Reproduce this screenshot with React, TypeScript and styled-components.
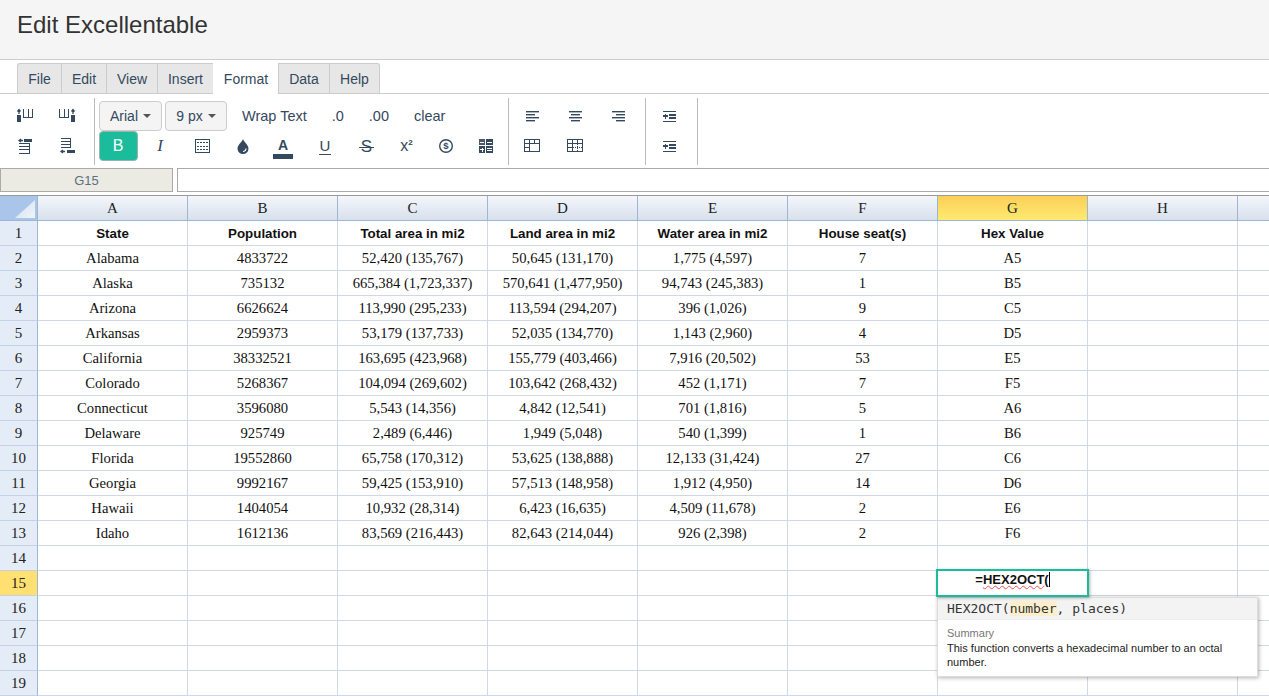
import React from "react";
import styled, { createGlobalStyle } from "styled-components";

const INK = "#34495e";

const Global = createGlobalStyle`
  html, body { margin: 0; padding: 0; height: 696px; overflow: hidden; background: #fff; }
  * { box-sizing: border-box; }
  body { font-family: "Liberation Sans", Arial, sans-serif; color: #333; }
`;

const Page = styled.div`
  width: 1269px;
  height: 696px;
  overflow: hidden;
  display: flex;
  flex-direction: column;
`;

const Header = styled.header`
  height: 60px;
  flex: none;
  background: #f5f5f5;
  border-bottom: 1px solid #ccc;
  padding: 11px 0 0 17px;
`;

const Title = styled.h1`
  margin: 0;
  font-size: 24px;
  font-weight: 400;
  line-height: 28px;
  color: #333;
`;

const TabBar = styled.nav`
  height: 34px;
  flex: none;
  display: flex;
  align-items: flex-end;
  padding-left: 17px;
  border-bottom: 1px solid #ccc;
`;

const Tab = styled.div<{ $active?: boolean; $w: number }>`
  width: ${(p) => p.$w}px;
  height: ${(p) => (p.$active ? 31 : 30)}px;
  margin-bottom: ${(p) => (p.$active ? -1 : 0)}px;
  display: flex;
  align-items: center;
  justify-content: center;
  font-size: 14px;
  color: ${INK};
  background: ${(p) => (p.$active ? "#fff" : "#e7e7e7")};
  border: 1px solid #ccc;
  border-bottom: 0;
  border-right-width: 0;
  border-color: ${(p) => (p.$active ? "transparent" : "#ccc")};
  &:first-child { border-top-left-radius: 3px; }
  &:last-child { border-top-right-radius: 3px; border-right-width: 1px; }
`;

const Toolbar = styled.div`
  height: 74px;
  flex: none;
  display: flex;
  padding-top: 4px;
`;

const Group = styled.div<{ $w: number; $pl: number }>`
  width: ${(p) => p.$w}px;
  height: 67px;
  padding: 3px 0 0 ${(p) => p.$pl}px;
  border-right: 1px solid #bbb;
  flex: none;
`;

const ToolRow = styled.div`
  height: 30px;
  display: flex;
  align-items: center;
`;

const IconButton = styled.div<{ $w?: number }>`
  width: ${(p) => p.$w ?? 41}px;
  height: 30px;
  flex: none;
  display: flex;
  align-items: center;
  justify-content: center;
  color: ${INK};
`;

const Select = styled.div<{ $w: number; $ml?: number }>`
  width: ${(p) => p.$w}px;
  height: 30px;
  margin-left: ${(p) => p.$ml ?? 0}px;
  flex: none;
  display: flex;
  align-items: center;
  justify-content: center;
  gap: 5px;
  font-size: 14px;
  color: ${INK};
  background: #f4f4f4;
  border: 1px solid #ccc;
  border-radius: 4px;
`;

const Caret = styled.span`
  width: 0;
  height: 0;
  border-left: 4px solid transparent;
  border-right: 4px solid transparent;
  border-top: 4px solid #555;
`;

const TextTool = styled.div<{ $ml?: number }>`
  padding: 0 12.5px;
  margin-left: ${(p) => p.$ml ?? 0}px;
  font-size: 14.5px;
  color: ${INK};
`;

const BoldButton = styled.div`
  width: 39px;
  height: 30px;
  margin-right: 1px;
  padding-right: 1px;
  flex: none;
  display: flex;
  align-items: center;
  justify-content: center;
  font-size: 16px;
  color: #fff;
  background: #1abc9c;
  border: 1px solid #9db3ab;
  border-radius: 4px;
`;

const ItalicGlyph = styled.span`
  font: italic 17px "Liberation Serif", serif;
  color: ${INK};
`;

const ColorGlyph = styled.span`
  display: flex;
  flex-direction: column;
  align-items: center;
  font-size: 14px;
  font-weight: 700;
  line-height: 15px;
  margin-top: 4px;
  color: ${INK};
  &::after {
    content: "";
    display: block;
    width: 20px;
    height: 5px;
    margin-top: 1px;
    background: ${INK};
  }
`;

const UnderGlyph = styled.span`
  font-size: 15px;
  line-height: 15px;
  padding: 0 1px 1px;
  color: ${INK};
  border-bottom: 1px solid ${INK};
`;

const StrikeGlyph = styled.span`
  font-size: 17px;
  line-height: 17px;
  padding: 0 2px;
  color: ${INK};
  background: linear-gradient(${INK}, ${INK}) center 9px / 100% 1px no-repeat;
`;

const PowerGlyph = styled.span`
  font-size: 16px;
  line-height: 14px;
  color: ${INK};
  sup { font-size: 8px; vertical-align: 6px; line-height: 0; font-weight: 700; }
`;

const NameRow = styled.div`
  height: 24px;
  flex: none;
  display: flex;
  gap: 4px;
`;

const NameBox = styled.div`
  width: 173px;
  flex: none;
  display: flex;
  align-items: center;
  justify-content: center;
  font-size: 13px;
  color: #5f6f80;
  background: #ebebe4;
  border: 1px solid #aaa;
`;

const FormulaInput = styled.div`
  flex: 1;
  margin-right: -2px;
  background: #fff;
  border: 1px solid #aaa;
`;

const Sheet = styled.div`
  margin-top: 3px;
  flex: none;
  display: grid;
  grid-template-columns: 38px repeat(9, 150px);
  grid-auto-rows: 25px;
  border-top: 1px solid #999;
  width: 1388px;
`;

const Corner = styled.div`
  position: relative;
  background: #a9c5e9;
  border-right: 1px solid #9db6d2;
  border-bottom: 1px solid #9db6d2;
  &::after {
    content: "";
    position: absolute;
    right: 2px;
    bottom: 2px;
    width: 20px;
    height: 18px;
    background: linear-gradient(135deg, #d3e0f2, #f0f4fa);
    clip-path: polygon(100% 0, 100% 100%, 0 100%);
  }
`;

const ColHead = styled.div<{ $on?: boolean }>`
  display: flex;
  align-items: center;
  justify-content: center;
  font: 15px "Liberation Serif", serif;
  color: #222;
  background: ${(p) =>
    p.$on
      ? "linear-gradient(#fccf58, #ffea70)"
      : "linear-gradient(#f4f7fb, #d7e0ec)"};
  border-right: 1px solid #9db6d2;
  border-bottom: 1px solid #9db6d2;
`;

const RowHead = styled.div<{ $on?: boolean }>`
  display: flex;
  align-items: center;
  justify-content: center;
  font: 15px "Liberation Serif", serif;
  color: #222;
  background: ${(p) => (p.$on ? "#ffe070" : "#e4ecf7")};
  border-right: 1px solid #9db6d2;
  border-bottom: 1px solid #c5d2e3;
`;

const Cell = styled.div<{ $bold?: boolean }>`
  position: relative;
  display: flex;
  align-items: center;
  justify-content: center;
  white-space: nowrap;
  color: #111;
  font: ${(p) =>
    p.$bold
      ? `700 10pt "Liberation Sans", Arial, sans-serif`
      : `11pt "Liberation Serif", serif`};
  background: #fff;
  border-right: 1px solid #d0d7e5;
  border-bottom: 1px solid #d0d7e5;
`;

const Editor = styled.div`
  position: absolute;
  left: -2px;
  top: -2px;
  width: 153px;
  height: 28px;
  z-index: 3;
  background: #fff;
  border: 2px solid #1abc9c;
  box-shadow: 1px 1px 3px rgba(0, 0, 0, 0.3);
  font: 700 13px "Liberation Sans", Arial, sans-serif;
  color: #111;
  text-align: center;
  line-height: 15px;
  padding-top: 1px;
`;

const Typed = styled.span`
  border-right: 1px solid #000;
`;

const Misspelt = styled.span`
  text-decoration: underline wavy #f05050;
  text-decoration-thickness: 1px;
  text-underline-offset: 1px;
`;

const Hint = styled.div`
  position: absolute;
  left: -1px;
  top: 26px;
  width: 321px;
  height: 80px;
  z-index: 2;
  background: #fff;
  border: 1px solid #ddd;
  box-shadow: 1px 1px 4px rgba(0, 0, 0, 0.3);
  font: 11px "Liberation Sans", Arial, sans-serif;
  white-space: normal;
`;

const Signature = styled.div`
  height: 22px;
  padding: 0 9px;
  display: flex;
  align-items: center;
  background: #f3f3f3;
  border-bottom: 1px solid #eee;
  font: 13px "DejaVu Sans Mono", monospace;
  color: #333;
  white-space: pre;
`;

const Param = styled.span`
  background: #fdefcb;
`;

const HintBody = styled.div`
  padding: 6px 9px 0;
  line-height: 14.5px;
  color: #222;
`;

const HintLabel = styled.div`
  color: #777;
`;

const Svg: React.FC<{ w?: number; h?: number; children: React.ReactNode }> = ({ w = 18, h = 16, children }) => (
  <svg width={w} height={h} viewBox={`0 0 ${w} ${h}`} fill="none" stroke={INK} strokeWidth={1} shapeRendering="crispEdges">
    {children}
  </svg>
);

const InsColLeft = () => (
  <Svg>
    <rect x="0" y="7" width="4" height="7" fill={INK} stroke="none" />
    <path d="M2 6V2M0.5 3.5L2 1.5L3.5 3.5" strokeWidth="1.3" shapeRendering="auto" />
    <path d="M6.5 1v8.5h9V1M11 1v8.5" />
  </Svg>
);
const InsColRight = () => (
  <Svg>
    <rect x="13" y="7" width="4" height="7" fill={INK} stroke="none" />
    <path d="M15 6V2M13.5 3.5L15 1.5L16.5 3.5" strokeWidth="1.3" shapeRendering="auto" />
    <path d="M1.5 1v8.5h9V1M6 1v8.5" />
  </Svg>
);
const InsRowAbove = () => (
  <Svg>
    <rect x="7" y="1" width="8" height="3" fill={INK} stroke="none" />
    <path d="M6 2.5H2.5M4 1L2 2.5L4 4" strokeWidth="1.3" shapeRendering="auto" />
    <path d="M2 5.5h10v10H2M2 8.5h10M2 11.5h10" />
  </Svg>
);
const InsRowBelow = () => (
  <Svg>
    <rect x="9" y="12" width="8" height="3" fill={INK} stroke="none" />
    <path d="M7 13.5H3.5M5 12L3 13.5L5 15" strokeWidth="1.3" shapeRendering="auto" />
    <path d="M3 .5h9v9H3M3 3.5h9M3 6.5h9" />
  </Svg>
);
const Borders = () => (
  <Svg w={15} h={15}>
    <rect x="0.5" y="0.5" width="14" height="13" />
    <path d="M2 3.5h11M2 7.5h11M2 10.5h11" strokeDasharray="2 1" />
  </Svg>
);
const Drop = () => (
  <svg width="12" height="15" viewBox="0 0 12 15">
    <path d="M6 0C5 3 0.5 6 0.5 9.5a5.5 5.5 0 0 0 11 0C11.5 6 7 3 6 0Z" fill={INK} />
    <path d="M9 9.5a3 3 0 0 1-3 3" stroke="#fff" strokeWidth="1.2" fill="none" />
  </svg>
);
const Dollar = () => (
  <svg width="16" height="16" viewBox="0 0 16 16" fill="none">
    <circle cx="8" cy="8" r="6.3" stroke={INK} strokeWidth="1.4" />
    <text x="8" y="11.3" textAnchor="middle" fontSize="9.5" fontWeight="700" fontFamily="Liberation Sans" fill={INK}>$</text>
  </svg>
);
const Tiles = () => (
  <svg width="14" height="14" viewBox="0 0 14 14" shapeRendering="crispEdges">
    <rect x="0" y="0" width="6" height="6" fill="#4a5a6b" />
    <rect x="7" y="0" width="7" height="6" fill={INK} />
    <rect x="0" y="7" width="6" height="7" fill={INK} />
    <rect x="7" y="7" width="7" height="7" fill={INK} />
    <path d="M1 3h4M8 3h5M8 9.5h5M8 11.5h5M1 10.5h4M3 8.5v4" stroke="#fff" strokeWidth="1" />
  </svg>
);
const Align: React.FC<{ side: "l" | "c" | "r" }> = ({ side }) => {
  const x = (len: number) => (side === "l" ? 0 : side === "c" ? (13 - len) / 2 : 13 - len);
  const line = (y: number, len: number) => <rect x={x(len)} y={y} width={len} height={1.4} fill={INK} />;
  return (
    <svg width="13" height="11" viewBox="0 0 13 11">
      {line(0, 13)}
      {line(3, 9)}
      {line(6, 13)}
      {line(9, 9)}
    </svg>
  );
};
const MergeA = () => (
  <Svg w={17} h={14}>
    <rect x="0.5" y="0.5" width="15" height="12" />
    <path d="M0.5 4.5h15M5.5 .5v12M10.5 .5v4M0.5 8.5h5" />
  </Svg>
);
const MergeB = () => (
  <Svg w={17} h={14}>
    <rect x="0.5" y="0.5" width="15" height="12" />
    <path d="M0.5 4.5h15M5.5 .5v12M10.5 .5v4M0.5 8.5h5" />
    <path d="M5.5 8.5h10M10.5 4.5v8" strokeDasharray="1 1" />
  </Svg>
);
const Indent = () => (
  <Svg w={13} h={11}>
    <path d="M0 .5h13M0 10.5h13" />
    <path d="M6 3.5h7M6 6.5h7" strokeWidth="2" />
    <path d="M0 5h5M2.5 2.5v5" strokeWidth="1.4" />
  </Svg>
);

const tabs: [string, number][] = [
  ["File", 44], ["Edit", 45], ["View", 51], ["Insert", 56],
  ["Format", 65], ["Data", 51], ["Help", 51],
];

const columns = ["A", "B", "C", "D", "E", "F", "G", "H", "I"];

const data: string[][] = [
  ["State", "Population", "Total area in mi2", "Land area in mi2", "Water area in mi2", "House seat(s)", "Hex Value"],
  ["Alabama", "4833722", "52,420 (135,767)", "50,645 (131,170)", "1,775 (4,597)", "7", "A5"],
  ["Alaska", "735132", "665,384 (1,723,337)", "570,641 (1,477,950)", "94,743 (245,383)", "1", "B5"],
  ["Arizona", "6626624", "113,990 (295,233)", "113,594 (294,207)", "396 (1,026)", "9", "C5"],
  ["Arkansas", "2959373", "53,179 (137,733)", "52,035 (134,770)", "1,143 (2,960)", "4", "D5"],
  ["California", "38332521", "163,695 (423,968)", "155,779 (403,466)", "7,916 (20,502)", "53", "E5"],
  ["Colorado", "5268367", "104,094 (269,602)", "103,642 (268,432)", "452 (1,171)", "7", "F5"],
  ["Connecticut", "3596080", "5,543 (14,356)", "4,842 (12,541)", "701 (1,816)", "5", "A6"],
  ["Delaware", "925749", "2,489 (6,446)", "1,949 (5,048)", "540 (1,399)", "1", "B6"],
  ["Florida", "19552860", "65,758 (170,312)", "53,625 (138,888)", "12,133 (31,424)", "27", "C6"],
  ["Georgia", "9992167", "59,425 (153,910)", "57,513 (148,958)", "1,912 (4,950)", "14", "D6"],
  ["Hawaii", "1404054", "10,932 (28,314)", "6,423 (16,635)", "4,509 (11,678)", "2", "E6"],
  ["Idaho", "1612136", "83,569 (216,443)", "82,643 (214,044)", "926 (2,398)", "2", "F6"],
];

export default function App() {
  const rows = Array.from({ length: 19 }, (_, i) => i);
  return (
    <Page>
      <Global />
      <Header>
        <Title>Edit Excellentable</Title>
      </Header>
      <TabBar>
        {tabs.map(([t, w]) => (
          <Tab key={t} $w={w} $active={t === "Format"}>{t}</Tab>
        ))}
      </TabBar>
      <Toolbar>
        <Group $w={95} $pl={5}>
          <ToolRow>
            <IconButton><InsColLeft /></IconButton>
            <IconButton><InsColRight /></IconButton>
          </ToolRow>
          <ToolRow>
            <IconButton><InsRowAbove /></IconButton>
            <IconButton><InsRowBelow /></IconButton>
          </ToolRow>
        </Group>
        <Group $w={414} $pl={4}>
          <ToolRow>
            <Select $w={63}>Arial <Caret /></Select>
            <Select $w={62} $ml={3}>9 px <Caret /></Select>
            <TextTool $ml={2.5}>Wrap Text</TextTool>
            <TextTool>.0</TextTool>
            <TextTool>.00</TextTool>
            <TextTool>clear</TextTool>
          </ToolRow>
          <ToolRow>
            <BoldButton>B</BoldButton>
            <IconButton $w={42}><ItalicGlyph>I</ItalicGlyph></IconButton>
            <IconButton $w={42}><Borders /></IconButton>
            <IconButton $w={39}><Drop /></IconButton>
            <IconButton $w={42}><ColorGlyph>A</ColorGlyph></IconButton>
            <IconButton $w={42}><UnderGlyph>U</UnderGlyph></IconButton>
            <IconButton $w={41}><StrikeGlyph>S</StrikeGlyph></IconButton>
            <IconButton $w={39}><PowerGlyph>x<sup>2</sup></PowerGlyph></IconButton>
            <IconButton $w={40}><Dollar /></IconButton>
            <IconButton $w={40}><Tiles /></IconButton>
          </ToolRow>
        </Group>
        <Group $w={137} $pl={2}>
          <ToolRow>
            <IconButton $w={43}><Align side="l" /></IconButton>
            <IconButton $w={43}><Align side="c" /></IconButton>
            <IconButton $w={43}><Align side="r" /></IconButton>
          </ToolRow>
          <ToolRow>
            <IconButton $w={43}><MergeA /></IconButton>
            <IconButton $w={43}><MergeB /></IconButton>
          </ToolRow>
        </Group>
        <Group $w={52} $pl={3}>
          <ToolRow><IconButton $w={40}><Indent /></IconButton></ToolRow>
          <ToolRow><IconButton $w={40}><Indent /></IconButton></ToolRow>
        </Group>
      </Toolbar>
      <NameRow>
        <NameBox>G15</NameBox>
        <FormulaInput />
      </NameRow>
      <Sheet>
        <Corner />
        {columns.map((c) => (
          <ColHead key={c} $on={c === "G"}>{c === "I" ? "" : c}</ColHead>
        ))}
        {rows.map((r) => (
          <React.Fragment key={r}>
            <RowHead $on={r === 14}>{r + 1}</RowHead>
            {columns.map((c, ci) => (
              <Cell key={c} $bold={r === 0}>
                {data[r]?.[ci] ?? ""}
                {r === 14 && c === "G" && (
                  <>
                    <Editor>
                      <Typed>=<Misspelt>HEX2OCT</Misspelt>(</Typed>
                    </Editor>
                    <Hint>
                      <Signature>HEX2OCT(<Param>number</Param>, places)</Signature>
                      <HintBody>
                        <HintLabel>Summary</HintLabel>
                        This function converts a hexadecimal number to an octal number.
                      </HintBody>
                    </Hint>
                  </>
                )}
              </Cell>
            ))}
          </React.Fragment>
        ))}
      </Sheet>
    </Page>
  );
}
